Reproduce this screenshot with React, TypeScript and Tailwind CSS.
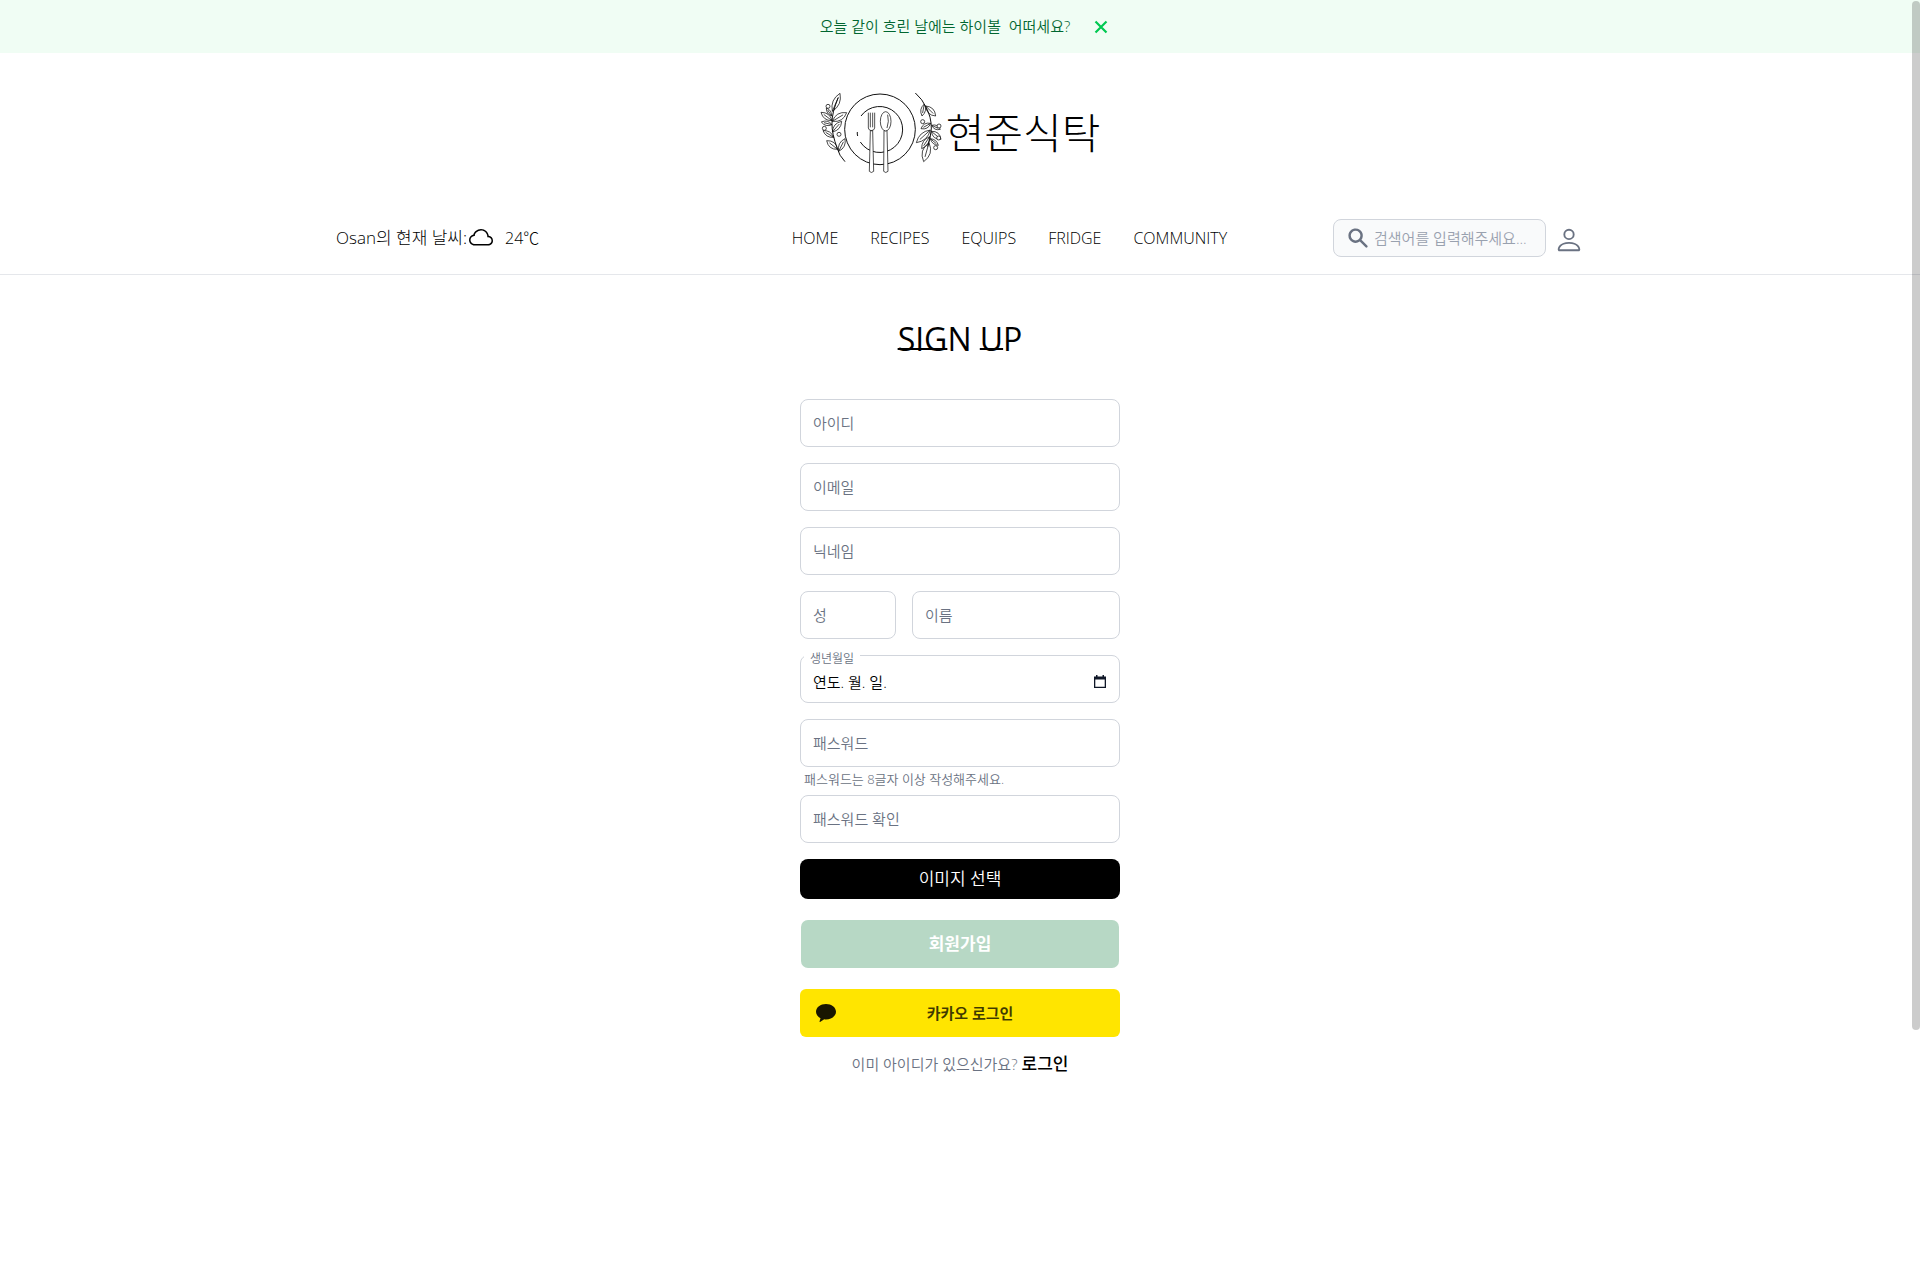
import { useState } from "react";
import type { InputHTMLAttributes } from "react";
import { BsCloud, BsPerson } from "react-icons/bs";
import { HiSearch } from "react-icons/hi";

type LeafProps = { from: [number, number]; to: [number, number]; w: number };

// A pointed leaf between two points, with its centre vein.
function Leaf({ from: [x1, y1], to: [x2, y2], w }: LeafProps) {
  const len = Math.hypot(x2 - x1, y2 - y1);
  const nx = (-(y2 - y1) / len) * w;
  const ny = ((x2 - x1) / len) * w;
  const mx = (x1 + x2) / 2;
  const my = (y1 + y2) / 2;
  return (
    <path
      d={`M${x1} ${y1}Q${mx + nx} ${my + ny} ${x2} ${y2}Q${mx - nx} ${my - ny} ${x1} ${y1}L${mx + (x2 - mx) / 2} ${my + (y2 - my) / 2}`}
    />
  );
}

const leaves: LeafProps[] = [
  { from: [94, 94], to: [117, 40], w: 20 },
  { from: [92, 108], to: [76, 84], w: 10 },
  { from: [94, 124], to: [137, 98], w: 20 },
  { from: [93, 122], to: [60, 97], w: 16 },
  { from: [93, 134], to: [61, 126], w: 13 },
  { from: [94, 156], to: [122, 124], w: 16 },
  { from: [98, 172], to: [66, 152], w: 14 },
  { from: [110, 208], to: [77, 182], w: 18 },
  { from: [113, 214], to: [132, 176], w: 16 },
  { from: [370, 72], to: [363, 108], w: 14 },
  { from: [374, 78], to: [404, 108], w: 18 },
  { from: [389, 130], to: [360, 146], w: 14 },
  { from: [388, 150], to: [346, 188], w: 19 },
  { from: [392, 136], to: [418, 148], w: 12 },
  { from: [391, 154], to: [420, 178], w: 17 },
  { from: [386, 170], to: [362, 206], w: 15 },
  { from: [388, 176], to: [412, 196], w: 11 },
  { from: [384, 188], to: [368, 245], w: 24 },
];

const berries: [number, number][] = [
  [81, 79],
  [70, 145],
  [114, 163],
  [365, 125],
  [414, 138],
  [413, 174],
  [404, 203],
];

function PlateMark() {
  return (
    <svg viewBox="57 36 366 246" className="h-[82px] w-[122px]" fill="none" stroke="#111" strokeWidth="3" aria-hidden="true">
      <circle cx="237" cy="148" r="106" />
      <path d="M180 108A69 69 0 1 1 178 186" />
      <path d="M169 156Q168 162 170 168" />
      <path d="M132 245Q114 226 109 206Q92 160 93 130Q92 100 112 52" />
      <path d="M343 39Q366 60 373 78Q392 110 391 148Q388 176 380 200" />
      <g strokeWidth="2.3">
        {leaves.map((leaf, i) => (
          <Leaf key={i} {...leaf} />
        ))}
        {berries.map(([cx, cy]) => (
          <circle key={`${cx}-${cy}`} cx={cx} cy={cy} r="6" fill="#fff" />
        ))}
      </g>
      <g fill="#fff" strokeWidth="2.2">
        <path d="M249 152L248 274Q254 281 261 274L258 152Z" />
        <ellipse cx="254" cy="124" rx="16" ry="29" />
        <path d="M260 104Q265 124 258 144" fill="none" />
        <path d="M208 152L205 274Q211 281 218 274L215 152Z" />
        <path d="M202 98V144Q203 151 211 152Q220 151 221 144V98M208 98V142M215 98V142" fill="none" />
      </g>
    </svg>
  );
}

type FieldProps = InputHTMLAttributes<HTMLInputElement> & { label: string; wrapper?: string };

function Field({ label, wrapper = "", ...rest }: FieldProps) {
  return (
    <div className={wrapper}>
      <input
        {...rest}
        aria-label={label}
        placeholder={label}
        className="h-12 w-full rounded-lg border border-gray-300 bg-white px-3 text-[15px] text-gray-900 outline-none placeholder:text-gray-500 focus:border-gray-500"
      />
    </div>
  );
}

const navItems = ["HOME", "RECIPES", "EQUIPS", "FRIDGE", "COMMUNITY"];

export default function App() {
  const [banner, setBanner] = useState(true);

  return (
    <div className="min-h-screen bg-white font-['Open_Sans','Noto_Sans_CJK_KR',sans-serif] font-[350] text-gray-900">
      {banner && (
        <div className="flex h-[53px] items-center justify-center gap-6 bg-green-50 pl-2 text-[15px] text-green-800">
          <p className="whitespace-pre">오늘 같이 흐린 날에는 하이볼  어떠세요?</p>
          <button type="button" aria-label="닫기" onClick={() => setBanner(false)} className="text-green-500">
            <svg viewBox="0 0 14 14" className="size-3.5" stroke="currentColor" strokeWidth="2.2" fill="none">
              <path d="M1.5 1.5L12.5 12.5M12.5 1.5L1.5 12.5" />
            </svg>
          </button>
        </div>
      )}

      <header className="border-b border-gray-200">
        <a href="#home" className="flex items-center justify-center gap-1 pt-[39px]">
          <PlateMark />
          <span className="text-[42px] leading-[82px] font-light text-black">현준식탁</span>
        </a>
        <div className="mx-auto mt-[45px] flex max-w-7xl items-center justify-between px-4 pb-[17px]">
          <div className="flex w-[350px] items-center font-light text-black">
            <span className="text-[17px]">Osan의 현재 날씨:</span>
            <BsCloud className="ml-0.5 size-6" />
            <span className="ml-3">24℃</span>
          </div>
          <nav className="flex gap-8 text-black">
            {navItems.map((item) => (
              <a key={item} href={`#${item.toLowerCase()}`}>
                {item}
              </a>
            ))}
          </nav>
          <div className="flex items-center gap-2">
            <label className="flex h-[38px] w-[213px] items-center gap-1 rounded-lg border border-gray-300 bg-gray-50 pr-1 pl-3">
              <HiSearch className="size-6 shrink-0 text-gray-500" />
              <input
                type="search"
                aria-label="검색"
                placeholder="검색어를 입력해주세요..."
                className="w-full min-w-0 bg-transparent text-[15px] outline-none placeholder:text-gray-400"
              />
            </label>
            <button type="button" aria-label="내 계정" className="pt-1 text-gray-500">
              <BsPerson className="size-[30px]" />
            </button>
          </div>
        </div>
      </header>

      <main className="mx-auto flex w-80 flex-col pt-11">
        <h1 className="text-center text-[32px] leading-10 font-normal text-black">
          <span className="underline decoration-2 underline-offset-[-3px] [text-decoration-skip-ink:none]">SIG</span>N{" "}
          <span className="underline decoration-2 underline-offset-[-3px] [text-decoration-skip-ink:none]">U</span>P
        </h1>
        <form className="mt-10 flex flex-col" onSubmit={(e) => e.preventDefault()}>
          <div className="flex flex-col gap-4">
            <Field label="아이디" />
            <Field label="이메일" type="email" />
            <Field label="닉네임" />
            <div className="flex gap-4">
              <Field label="성" wrapper="w-24" />
              <Field label="이름" wrapper="flex-1" />
            </div>
            <div className="relative">
              <input
                id="birth"
                defaultValue="연도. 월. 일."
                className="h-12 w-full rounded-lg border border-gray-300 bg-white px-3 pt-1 text-[15px] text-black outline-none"
              />
              <label htmlFor="birth" className="absolute -top-1 left-1 bg-white px-1.5 text-xs leading-4 text-gray-500">
                생년월일
              </label>
              <button type="button" aria-label="날짜 선택" className="absolute top-5 right-3.5 text-gray-900">
                <svg viewBox="0 0 12 14" className="h-3.5 w-3" fill="currentColor">
                  <path d="M2 0h1.5v1.5h5V0H10v1.5h2V13H0V1.500H2zM1.300 4.500v7.200h9.400V4.500z" fillRule="evenodd" />
                </svg>
              </button>
            </div>
            <Field label="패스워드" type="password" />
          </div>
          <p className="px-1 pt-1 pb-2 text-[13px] leading-4 text-gray-500">패스워드는 8글자 이상 작성해주세요.</p>
          <Field label="패스워드 확인" type="password" />
          <button type="button" className="mt-4 h-10 rounded-lg bg-black text-[17px] text-white">
            이미지 선택
          </button>
          <button
            type="submit"
            className="mt-5 h-[50px] rounded-lg border border-transparent bg-[#b7d8c5] bg-clip-padding text-[17px] font-semibold text-white"
          >
            회원가입
          </button>
          <button
            type="button"
            className="mt-5 flex h-12 items-center rounded-md bg-[#ffe500] px-4 text-[15px] font-semibold text-black/75"
          >
            <svg viewBox="0 0 20 18" className="h-[18px] w-5 text-[#191600]" fill="currentColor" aria-hidden="true">
              <path d="M10 0C4.500 0 0 3.400 0 7.700C0 10.400 1.800 12.800 4.500 14.200L3.500 17.500C3.400 17.900 3.800 18.100 4.100 17.900L8.200 15.200C8.800 15.300 9.400 15.400 10 15.400C15.500 15.400 20 12 20 7.700C20 3.400 15.500 0 10 0Z" />
            </svg>
            <span className="flex-1">카카오 로그인</span>
          </button>
        </form>
        <p className="mt-3.5 flex items-center justify-center gap-1 text-[15px] text-gray-500">
          이미 아이디가 있으신가요?
          <a href="#login" className="text-[17px] font-medium text-black">
            로그인
          </a>
        </p>
      </main>

      <div className="fixed top-px right-0 h-[1029px] w-2 rounded-full bg-black/20" aria-hidden="true" />
    </div>
  );
}
